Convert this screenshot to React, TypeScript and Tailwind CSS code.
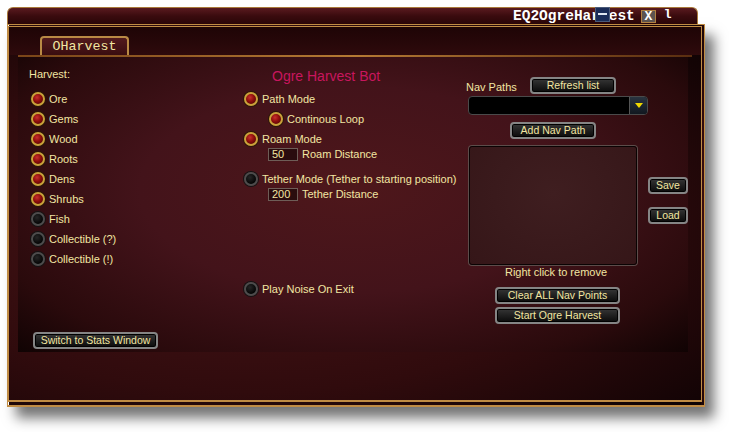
import React from "react";

const sans = "font-['Liberation_Sans',Arial,sans-serif]";
const mono = "font-['Liberation_Mono','Courier_New',monospace]";

const Radio = ({ on }: { on?: boolean }) =>
  on ? (
    <span className="block shrink-0 w-[14px] h-[14px] rounded-full border-2 border-[#c9a23a] bg-[radial-gradient(circle_at_40%_35%,#c8302c_0%,#8e0d0d_45%,#3c0303_100%)] shadow-[0_0_0_1px_#2a1806]" />
  ) : (
    <span className="block shrink-0 w-[14px] h-[14px] rounded-full border-2 border-[#4c4c4c] bg-[radial-gradient(circle_at_40%_35%,#262626_0%,#050505_70%)] shadow-[0_0_0_1px_#141414]" />
  );

const Btn = ({ label, className = "" }: { label: string; className?: string }) => (
  <div
    className={`flex items-center justify-center rounded-[4px] border-2 border-[#858585] bg-linear-to-b from-[#363636] to-[#0b0b0b] text-[#f2e6a2] text-[10.5px] leading-none shadow-[inset_0_0_0_1px_#000] ${className}`}
  >
    {label}
  </div>
);

const Row = ({ on, label, className = "" }: { on?: boolean; label: string; className?: string }) => (
  <div className={`flex items-center h-[20px] gap-[4px] ${className}`}>
    <Radio on={on} />
    <span>{label}</span>
  </div>
);

const Field = ({ value, label }: { value: string; label: string }) => (
  <div className="flex items-center h-[13px] gap-[4px] pl-[24px]">
    <div className="w-[30px] h-[13px] bg-[#2a0c0e] border border-[#6e5d57] pl-[3px] leading-[11px]">{value}</div>
    <span>{label}</span>
  </div>
);

export default function App() {
  return (
    <div className={`w-[729px] h-[432px] bg-white pt-[7px] pl-[7px] ${sans}`}>
      {/* title bar */}
      <div className="relative w-[691px] h-[17px] rounded-t-[6px] border border-b-0 border-[#a8793a] bg-linear-to-b from-[#5a1a1f] via-[#3a0b0e] to-[#2a0608] flex items-center">
        <div className={`ml-[505px] flex items-center text-white font-bold text-[14.5px] leading-none ${mono}`}>
          <span className="relative">
            EQ2OgreHarvest
            <span className="absolute left-[82px] top-[-2px] w-[15px] h-[15px] bg-[#1a2c58] border border-[#4a5a78] flex items-center justify-center">
              <span className="block w-[9px] h-[2px] bg-[#dfe6f0]" />
            </span>
          </span>
          <span className="ml-[6px] w-[15px] h-[13px] border border-[#b08040] bg-[#5c5450] flex items-center justify-center text-white text-[13px] font-bold leading-none">
            X
          </span>
          <span className="ml-[8px] text-[13px] -mt-[4px]">l</span>
        </div>
      </div>

      {/* main frame */}
      <div className="w-[698px] h-[383px] border-t-[3px] border-l-2 border-r-4 border-b-[7px] border-double border-[#c08c44] bg-[radial-gradient(ellipse_at_35%_55%,#4a1518_0%,#300b0d_55%,#0c0203_100%)] shadow-[9px_11px_12px_rgba(0,0,0,0.55)]">
        {/* tab row */}
        <div className="h-[28px] pt-[9px] pl-[31px] bg-linear-to-b from-[#1e0506] to-[#2e0a0c]">
          <div className={`w-[89px] h-[19px] rounded-t-[4px] border-2 border-b-0 border-[#b98a45] bg-linear-to-b from-[#521a1d] to-[#3a0d10] flex items-center justify-center text-[#f2e6a2] text-[13.3px] leading-none ${mono}`}>
            OHarvest
          </div>
        </div>
        <div className="ml-[9px] w-[674px] h-[2px] bg-linear-to-r from-[#7a4518] via-[#b57a34] to-[#5a2e10]" />

        {/* inner panel */}
        <div className="ml-[9px] w-[670px] h-[295px] bg-[radial-gradient(ellipse_at_50%_45%,#4e171b_0%,#43131a_45%,#2a0a0c_80%,#100303_100%)] flex pl-[11px] pt-[11px] text-[11px] text-[#f2e6a2]">
          {/* left column */}
          <div className="w-[215px] flex flex-col">
            <div className="h-[21px] leading-[13px]">Harvest:</div>
            <div className="pl-[2px]">
              <Row on label="Ore" />
              <Row on label="Gems" />
              <Row on label="Wood" />
              <Row on label="Roots" />
              <Row on label="Dens" />
              <Row on label="Shrubs" />
              <Row label="Fish" />
              <Row label="Collectible (?)" />
              <Row label="Collectible (!)" />
            </div>
            <Btn label="Switch to Stats Window" className="mt-[63px] ml-[4px] w-[125px] h-[17px]" />
          </div>

          {/* middle column */}
          <div className="w-[222px] flex flex-col">
            <div className="h-[21px] pl-[28px] text-[14px] leading-[16px] text-[#c8165e]">Ogre Harvest Bot</div>
            <Row on label="Path Mode" />
            <Row on label="Continous Loop" className="pl-[25px]" />
            <Row on label="Roam Mode" />
            <div className="-mt-[1px]">
              <Field value="50" label="Roam Distance" />
            </div>
            <Row label="Tether Mode (Tether to starting position)" className="mt-[8px]" />
            <div className="-mt-[1px]">
              <Field value="200" label="Tether Distance" />
            </div>
            <Row label="Play Noise On Exit" className="mt-[78px]" />
          </div>

          {/* right column */}
          <div className="flex-1 flex flex-col pt-[9px]">
            <div className="flex items-center h-[17px]">
              <span className="w-[64px] pt-[3px]">Nav Paths</span>
              <Btn label="Refresh list" className="w-[86px] h-[17px]" />
            </div>
            <div className="mt-[2px] ml-[2px] w-[180px] h-[19px] rounded-[4px] bg-black border border-[#4a4a4a] flex justify-end">
              <div className="w-[18px] h-full rounded-r-[3px] bg-linear-to-b from-[#2a3440] to-[#111820] border-l border-[#555] flex items-center justify-center">
                <span className="block w-0 h-0 border-l-[4px] border-r-[4px] border-t-[5px] border-l-transparent border-r-transparent border-t-[#f0d800]" />
              </div>
            </div>
            <Btn label="Add Nav Path" className="mt-[7px] ml-[44px] w-[86px] h-[17px]" />
            <div className="mt-[7px] ml-[3px] flex">
              <div className="w-[168px] h-[119px] rounded-[3px] bg-[radial-gradient(ellipse_at_50%_40%,#3f1e20_0%,#351618_100%)] border border-[#0a0303] shadow-[0_0_0_1px_#5c4c4a]" />
              <div className="ml-[11px] flex flex-col pt-[31px] gap-[13px]">
                <Btn label="Save" className="w-[40px] h-[17px]" />
                <Btn label="Load" className="w-[40px] h-[17px]" />
              </div>
            </div>
            <div className="ml-[3px] w-[174px] mt-[1px] h-[13px] leading-[13px] text-center">Right click to remove</div>
            <Btn label="Clear ALL Nav Points" className="mt-[8px] ml-[29px] w-[125px] h-[17px]" />
            <Btn label="Start Ogre Harvest" className="mt-[3px] ml-[29px] w-[125px] h-[17px]" />
          </div>
        </div>
      </div>
    </div>
  );
}
